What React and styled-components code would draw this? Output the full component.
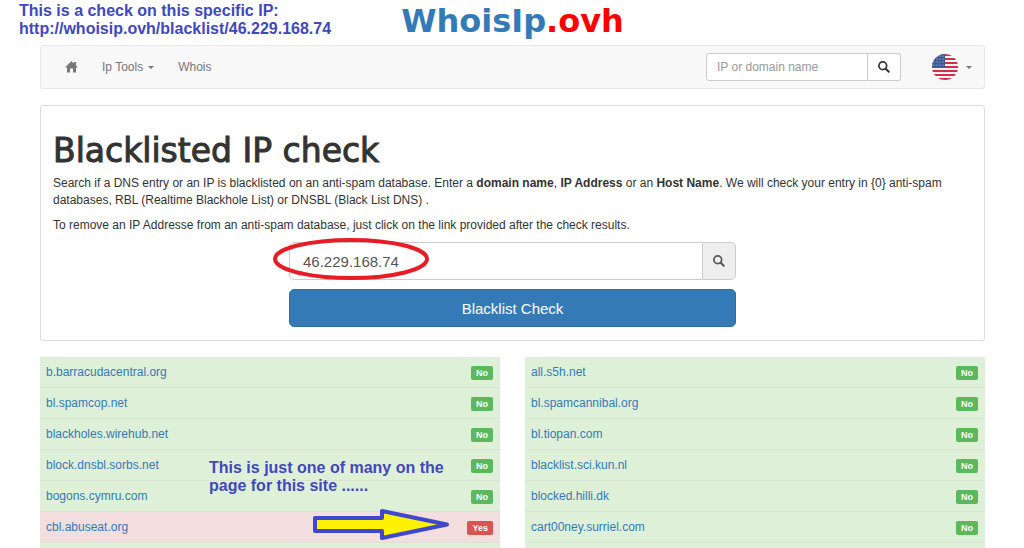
import React from "react";
import styled, { createGlobalStyle } from "styled-components";

const GlobalStyle = createGlobalStyle`
  *, *::before, *::after { box-sizing: border-box; }
  body {
    margin: 0;
    background: #fff;
    color: #333;
    font-family: "Liberation Sans", Arial, sans-serif;
    font-size: 12px;
    line-height: 17px;
  }
  button, input { font-family: inherit; }
`;

const Page = styled.div`
  position: relative;
  padding: 0 39px 0 40px;
`;

const Note = styled.p`
  position: absolute;
  left: ${(p) => p.$left}px;
  top: ${(p) => p.$top}px;
  margin: 0;
  color: #3f48bd;
  font-size: 16px;
  font-weight: 700;
  line-height: 18px;
  white-space: nowrap;
`;

const Header = styled.header`
  display: flex;
  justify-content: center;
  height: 45px;
`;

const Logo = styled.a`
  color: #337ab7;
  font-family: "DejaVu Sans", sans-serif;
  font-size: 32px;
  font-weight: 700;
  line-height: 43px;
  text-decoration: none;
`;

const LogoSuffix = styled.span`
  color: #f00;
`;

const Navbar = styled.nav`
  display: flex;
  align-items: center;
  height: 44px;
  padding: 0 12px 0 24px;
  background: #f8f8f8;
  border: 1px solid #e7e7e7;
  border-radius: 3px;
`;

const NavLink = styled.a`
  display: flex;
  align-items: center;
  gap: 5px;
  margin-right: 24px;
  color: #777;
  text-decoration: none;
`;

const Caret = styled.span`
  border-top: 3px solid currentColor;
  border-left: 3px solid transparent;
  border-right: 3px solid transparent;
`;

const SearchForm = styled.form`
  display: flex;
  width: 195px;
  height: 28px;
  margin: 0 31px 0 auto;
`;

const SearchInput = styled.input`
  flex: 1;
  min-width: 0;
  padding: 0 10px;
  border: 1px solid #ccc;
  border-radius: 3px 0 0 3px;
  background: #fff;
  color: #555;
  font-size: 12px;
  &::placeholder { color: #999; opacity: 1; }
`;

const SearchButton = styled.button`
  display: grid;
  place-items: center;
  width: 33px;
  padding: 0;
  border: 1px solid #ccc;
  border-left: 0;
  border-radius: 0 3px 3px 0;
  background: #fff;
  color: #333;
`;

const LanguageButton = styled.button`
  display: flex;
  align-items: center;
  gap: 8px;
  padding: 0;
  border: 0;
  background: none;
  color: #777;
`;

const Card = styled.main`
  margin-top: 16px;
  padding: 29px 12px 13px;
  border: 1px solid #ddd;
  border-radius: 3px;
`;

const Title = styled.h1`
  margin: 0 0 8px;
  font-family: "DejaVu Sans", sans-serif;
  font-size: 33px;
  font-weight: 400;
  line-height: 32px;
  -webkit-text-stroke: 1px currentColor;
`;

const Text = styled.p`
  margin: 0 0 8px;
`;

const CheckForm = styled.form`
  position: relative;
  max-width: 447px;
  margin: 0 auto;
`;

const InputGroup = styled.div`
  display: flex;
  height: 38px;
  margin-bottom: 9px;
`;

const CheckInput = styled.input`
  flex: 1;
  min-width: 0;
  padding: 0 13px;
  border: 1px solid #ccc;
  border-radius: 5px 0 0 5px;
  color: #555;
  font-size: 15px;
`;

const Addon = styled.span`
  display: grid;
  place-items: center;
  width: 33px;
  border: 1px solid #ccc;
  border-left: 0;
  border-radius: 0 5px 5px 0;
  background: #eee;
  color: #555;
`;

const CheckButton = styled.button`
  width: 100%;
  height: 38px;
  display: block;
  padding: 0;
  border: 1px solid #2e6da4;
  border-radius: 5px;
  background: #337ab7;
  color: #fff;
  font-size: 15px;
`;

const Circle = styled.svg`
  position: absolute;
  left: -17px;
  top: -5px;
  pointer-events: none;
`;

const Results = styled.section`
  display: grid;
  grid-template-columns: 1fr 1fr;
  gap: 25px;
  margin-top: 16px;
`;

const Column = styled.div`
  position: relative;
  padding-bottom: 5px;
  background: #dff0d8;
`;

const Table = styled.table`
  width: 100%;
  border-collapse: separate;
  border-spacing: 0;
`;

const Row = styled.tr`
  height: 31px;
  background: ${(p) => (p.$listed ? "#f2dede" : "#dff0d8")};
`;

const Cell = styled.td`
  padding: 1px 7px 0 6px;
  border-bottom: 1px solid #d9e3d4;
  text-align: ${(p) => (p.$end ? "right" : "left")};
`;

const HostLink = styled.a`
  color: #337ab7;
  text-decoration: none;
`;

const Badge = styled.span`
  display: inline-block;
  padding: 0 5px;
  border-radius: 2px;
  background: ${(p) => (p.$listed ? "#d9534f" : "#5cb85c")};
  color: #fff;
  font-size: 9px;
  font-weight: 700;
  line-height: 14px;
  vertical-align: middle;
`;

const Arrow = styled.svg`
  position: absolute;
  right: 48px;
  top: 149px;
`;

const HomeIcon = () => (
  <svg width="13" height="12" viewBox="0 0 26 24" fill="currentColor" aria-hidden="true">
    <path d="M13 0 0 13h4v10h6v-8h6v8h6V13h4l-4-4V2h-4v3z" />
  </svg>
);

const SearchIcon = () => (
  <svg width="12" height="12" viewBox="0 0 24 24" fill="none" stroke="currentColor" aria-hidden="true">
    <circle cx="9.5" cy="9.5" r="7.8" strokeWidth="3.4" />
    <path d="m15.5 15.5 6 6" strokeWidth="4" strokeLinecap="round" />
  </svg>
);

const FlagIcon = () => (
  <svg width="26" height="26" viewBox="0 0 26 26" aria-hidden="true">
    <clipPath id="flag-round"><circle cx="13" cy="13" r="13" /></clipPath>
    <g clipPath="url(#flag-round)">
      <rect width="26" height="26" fill="#f6f3f4" />
      {[0, 4, 8, 12, 16, 20, 24].map((y) => (
        <rect key={y} y={y} width="26" height="2" fill="#d22f48" />
      ))}
      <rect width="13" height="14" fill="#3d5a96" />
      {[2, 5, 8, 11].map((y) =>
        [2, 5, 8, 11].map((x) => <circle key={`${x}-${y}`} cx={x} cy={y} r="0.6" fill="#c5cfe3" />)
      )}
    </g>
  </svg>
);

const leftHosts = [
  ["b.barracudacentral.org", false],
  ["bl.spamcop.net", false],
  ["blackholes.wirehub.net", false],
  ["block.dnsbl.sorbs.net", false],
  ["bogons.cymru.com", false],
  ["cbl.abuseat.org", true],
];

const rightHosts = [
  ["all.s5h.net", false],
  ["bl.spamcannibal.org", false],
  ["bl.tiopan.com", false],
  ["blacklist.sci.kun.nl", false],
  ["blocked.hilli.dk", false],
  ["cart00ney.surriel.com", false],
];

const HostTable = ({ hosts }) => (
  <Table>
    <tbody>
      {hosts.map(([host, listed]) => (
        <Row key={host} $listed={listed}>
          <Cell><HostLink href={`#${host}`}>{host}</HostLink></Cell>
          <Cell $end><Badge $listed={listed}>{listed ? "Yes" : "No"}</Badge></Cell>
        </Row>
      ))}
    </tbody>
  </Table>
);

export default function App() {
  return (
    <>
      <GlobalStyle />
      <Page>
        <Note $left={19} $top={2}>
          This is a check on this specific IP:<br />
          http://whoisip.ovh/blacklist/46.229.168.74
        </Note>
        <Header>
          <Logo href="#home">WhoisIp<LogoSuffix>.ovh</LogoSuffix></Logo>
        </Header>
        <Navbar>
          <NavLink href="#home" aria-label="Home"><HomeIcon /></NavLink>
          <NavLink href="#tools">Ip Tools <Caret /></NavLink>
          <NavLink href="#whois">Whois</NavLink>
          <SearchForm>
            <SearchInput aria-label="IP or domain name" placeholder="IP or domain name" />
            <SearchButton type="button" aria-label="Search"><SearchIcon /></SearchButton>
          </SearchForm>
          <LanguageButton type="button" aria-label="Language"><FlagIcon /><Caret /></LanguageButton>
        </Navbar>
        <Card>
          <Title>Blacklisted IP check</Title>
          <Text>
            Search if a DNS entry or an IP is blacklisted on an anti-spam database. Enter a{" "}
            <strong>domain name</strong>, <strong>IP Address</strong> or an <strong>Host Name</strong>. We
            will check your entry in {"{0}"} anti-spam databases, RBL (Realtime Blackhole List) or DNSBL
            (Black List DNS) .
          </Text>
          <Text>
            To remove an IP Addresse from an anti-spam database, just click on the link provided after the
            check results.
          </Text>
          <CheckForm>
            <InputGroup>
              <CheckInput aria-label="IP address" defaultValue="46.229.168.74" />
              <Addon><SearchIcon /></Addon>
            </InputGroup>
            <CheckButton type="button">Blacklist Check</CheckButton>
            <Circle width="158" height="44" viewBox="0 0 158 44" aria-hidden="true">
              <ellipse cx="79" cy="22" rx="76" ry="19" fill="none" stroke="#e81c24" strokeWidth="4" />
            </Circle>
          </CheckForm>
        </Card>
        <Results>
          <Column>
            <HostTable hosts={leftHosts} />
            <Note $left={169} $top={102}>
              This is just one of many on the<br />
              page for this site ......
            </Note>
            <Arrow width="142" height="38" viewBox="0 0 142 38" aria-hidden="true">
              <path
                d="M5 12h67V5l65 13.500-65 13.500v-7H5z"
                fill="#fff200"
                stroke="#3f48cc"
                strokeWidth="4"
                strokeLinejoin="round"
              />
            </Arrow>
          </Column>
          <Column>
            <HostTable hosts={rightHosts} />
          </Column>
        </Results>
      </Page>
    </>
  );
}
